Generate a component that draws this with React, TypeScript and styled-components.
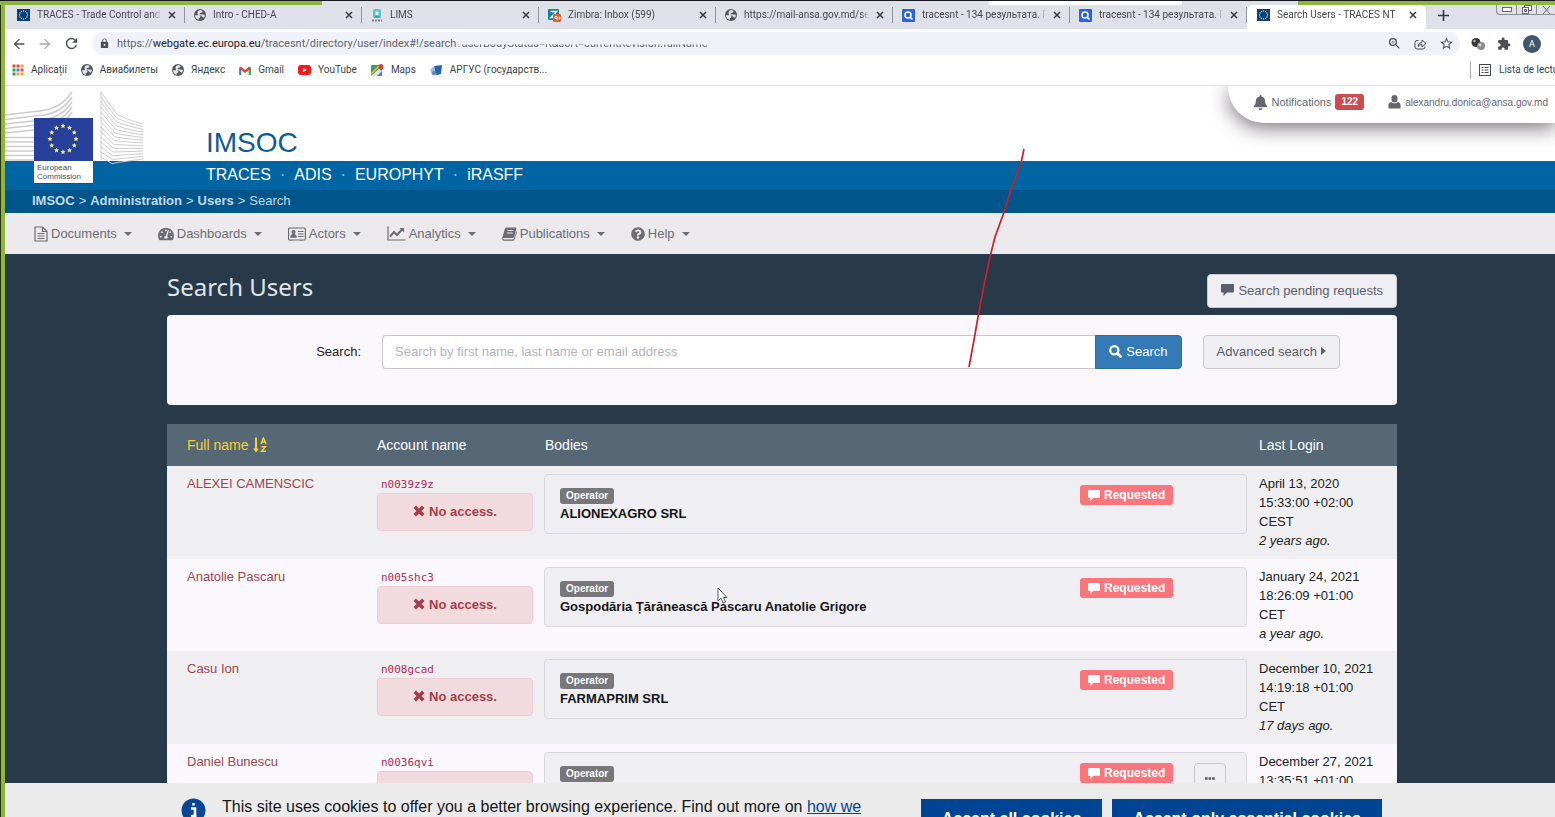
import React from "react";
import styled, { createGlobalStyle, css } from "styled-components";
import { FaBell, FaQuestionCircle, FaTachometerAlt } from "react-icons/fa";
import { MdExtension, MdOutlineZoomIn, MdStarBorder, MdLock, MdArrowBack, MdArrowForward, MdRefresh } from "react-icons/md";

const UI = `Roboto, "Noto Sans", sans-serif`;
const HEADING = `"Noto Sans", "Open Sans", sans-serif`;
const ARIAL = `"Liberation Sans", Arial, sans-serif`;

const Global = createGlobalStyle`
  *, *::before, *::after { box-sizing: border-box; }
  body { margin: 0; background: #283a4a; font: 13px/19px ${ARIAL}; color: #222; }
  a { color: inherit; text-decoration: none; }
  button, input { font-family: inherit; }
  svg { flex: none; }
`;

/* ---------- desktop frame ---------- */
const Screen = styled.div`
  position: relative;
  display: flex;
  flex-direction: column;
  height: 100vh;
  overflow: hidden;
  padding-left: 5px;
  background: linear-gradient(to right, #26330f 1px, #8fb53a 1px);
`;
const ShareFrame = styled.div`
  position: absolute;
  inset: 0 0 auto 0;
  height: 5px;
  border-top: 1px solid #17171f;
  background: linear-gradient(to right, #8fb53a 322px, transparent 322px, transparent 989px, #fff 989px, #fff 1182px, transparent 1182px, transparent calc(100% - 257px), #8fb53a calc(100% - 257px));
`;
const Scribble = styled.svg`
  position: absolute;
  top: 145px;
  left: 955px;
  pointer-events: none;
`;
const Pointer = styled.svg`
  position: absolute;
  top: 587px;
  left: 717px;
  pointer-events: none;
`;

/* ---------- browser ---------- */
const TabStrip = styled.div`
  display: flex;
  align-items: stretch;
  flex: none;
  height: 29px;
  padding: 5px 0 0 3px;
  background: #dee1e8;
  font: 10px/20px ${UI};
  color: #45484d;
`;
const Tab = styled.div<{ $active?: boolean }>`
  display: flex;
  align-items: center;
  flex: none;
  width: 177px;
  padding: 0 9px 4px;
  gap: 7px;
  position: relative;
  ${(p) =>
    p.$active
      ? css`
          width: 179px;
          padding: 0 9px 4px 10px;
          background: #fff;
          border-radius: 6px 6px 0 0;
        `
      : css`
          &::after {
            content: "";
            position: absolute;
            right: 0;
            top: 2px;
            height: 16px;
            width: 1px;
            background: #90949b;
          }
        `}
`;
const TabTitle = styled.span`
  flex: 1;
  min-width: 0;
  overflow: hidden;
  white-space: nowrap;
  mask-image: linear-gradient(to left, transparent, #000 8px);
`;
const PlainButton = styled.button`
  display: inline-flex;
  align-items: center;
  justify-content: center;
  flex: none;
  padding: 0;
  border: 0;
  background: none;
  color: inherit;
`;
const NewTab = styled(PlainButton)`
  width: 34px;
  padding-bottom: 4px;
`;
const WindowControls = styled.div`
  display: flex;
  align-self: flex-start;
  margin-left: auto;
  height: 10px;
  border: 1px solid #8b8d99;
  border-top: 0;
  border-right: 0;
  border-radius: 0 0 0 4px;
`;
const WindowButton = styled(PlainButton)`
  width: 20px;
  border-right: 1px solid #8b8d99;
  &:last-child { border: 0; width: 18px; }
`;
const Toolbar = styled.div`
  display: flex;
  align-items: center;
  flex: none;
  height: 29px;
  padding: 0 14px 0 6px;
  background: #fff;
  color: #4b4e53;
`;
const NavButtons = styled.div`
  display: flex;
  gap: 10px;
`;
const Omnibox = styled.form`
  display: flex;
  align-items: center;
  flex: 1;
  min-width: 0;
  height: 23px;
  margin: 0 11px 0 12px;
  padding: 0 6px 0 7px;
  border-radius: 12px;
  background: #eff2f8;
  font: 11px/20px ${UI};
`;
const Url = styled.span`
  display: flex;
  flex: 1;
  min-width: 0;
  margin-left: 7px;
  white-space: nowrap;
  color: #5f646b;
  b { font-weight: 400; color: #1f2124; }
`;
const TornText = styled.span`
  mask-image: linear-gradient(transparent 10px, #000 11px);
`;
const Actions = styled.div`
  display: flex;
  align-items: center;
  gap: 12px;
`;
const Avatar = styled(PlainButton)`
  width: 18px;
  height: 18px;
  border-radius: 50%;
  background: #40566b;
  color: #fff;
  font: 9px/18px ${UI};
`;
const Bookmarks = styled.nav`
  display: flex;
  align-items: center;
  flex: none;
  height: 28px;
  padding: 0 0 3px 7px;
  border-bottom: 1px solid #e4e0e7;
  background: #fff;
  font: 10px/18px ${UI};
  color: #3c3f44;
`;
const Bookmark = styled.a`
  display: flex;
  align-items: center;
  gap: 7px;
  margin-right: 14px;
  white-space: nowrap;
`;
const ReadingList = styled(PlainButton)`
  gap: 8px;
  margin: 0 -12px 0 auto;
  padding-left: 8px;
  border-left: 1px solid #aab;
  font: 10px/18px ${UI};
  white-space: nowrap;
`;

/* ---------- site header ---------- */
const Site = styled.div`
  display: flex;
  flex-direction: column;
  flex: 1;
  min-height: 0;
  overflow: hidden;
  background: #283a4a;
`;
const Masthead = styled.header`
  position: relative;
  flex: none;
`;
const Brand = styled.div`
  display: flex;
  justify-content: space-between;
  align-items: flex-start;
  height: 75px;
  padding-left: 201px;
  background: #fff;
`;
const BrandName = styled.a`
  margin-top: 39px;
  font-size: 28px;
  line-height: 36px;
  color: #0f5b94;
`;
const UserBar = styled.div`
  display: flex;
  align-items: center;
  height: 37px;
  padding: 0 7px 5px 25px;
  border-radius: 0 0 0 36px;
  background: #fff;
  box-shadow: 0 5px 20px rgba(50, 40, 50, 0.65);
  clip-path: inset(0 0 -38px -40px);
  font-size: 11px;
  color: #66676c;
`;
const UserLink = styled.a<{ $small?: boolean }>`
  display: flex;
  align-items: center;
  gap: 4px;
  font-size: ${(p) => (p.$small ? "10px" : "11px")};
  & + & { margin-left: 24px; }
`;
const Count = styled.span`
  padding: 0 6px;
  border-radius: 3px;
  background: #cf4a4e;
  color: #fff;
  font-weight: 700;
  font-size: 10px;
  line-height: 16px;
`;
const Logo = styled.a`
  position: absolute;
  top: 5px;
  left: 0;
  width: 140px;
`;
const LogoCaption = styled.span`
  display: block;
  position: absolute;
  top: 70px;
  left: 29px;
  width: 59px;
  padding: 2px 3px;
  background: #fff;
  color: #4a4c58;
  font-size: 8px;
  line-height: 9px;
`;
const SystemBar = styled.nav`
  display: flex;
  align-items: center;
  gap: 9px;
  height: 29px;
  padding: 0 0 3px 201px;
  background: #0065a2;
  color: #fff;
  font-size: 16px;
  span { color: #a9cbe2; }
`;
const Crumbs = styled.nav`
  display: flex;
  gap: 4px;
  height: 23px;
  padding-left: 27px;
  background: #00558a;
  color: #c3d9e8;
  line-height: 22px;
`;
const MenuBar = styled.nav`
  display: flex;
  align-items: center;
  gap: 26px;
  height: 41px;
  padding-left: 29px;
  background: #ebe9ec;
  color: #6c6d74;
`;
const MenuItem = styled(PlainButton)`
  gap: 3px;
  font-size: 13px;
  line-height: 19px;
`;
const Caret = styled.i`
  margin-left: 4px;
  border: 4px solid transparent;
  border-top-color: currentColor;
  border-bottom: 0;
`;
const RightCaret = styled.i`
  border: 4px solid transparent;
  border-left: 5px solid currentColor;
  border-right: 0;
`;

/* ---------- page ---------- */
const Main = styled.main`
  padding: 20px 158px 0 162px;
`;
const PageHead = styled.div`
  display: flex;
  justify-content: space-between;
  height: 41px;
`;
const Title = styled.h1`
  margin: 0;
  font: 24px/26px ${HEADING};
  color: #dfe6ee;
`;
const Button = styled.button`
  display: inline-flex;
  align-items: center;
  gap: 4px;
  height: 34px;
  padding: 0 13px 2px;
  border: 1px solid #c9c8cf;
  border-radius: 4px;
  background: #efeef2;
  color: #5a606b;
  font-size: 13px;
  white-space: nowrap;
`;
const PrimaryButton = styled(Button)`
  border-color: #2e6da4;
  border-radius: 0 4px 4px 0;
  background: #337ab7;
  color: #fff;
`;
const SearchPanel = styled.form`
  display: flex;
  align-items: flex-start;
  height: 90px;
  padding: 20px 57px 0 0;
  border-radius: 4px;
  background: #f9f7fb;
`;
const Label = styled.label`
  width: 194px;
  line-height: 34px;
  text-align: right;
`;
const SearchInput = styled.input`
  flex: 1;
  min-width: 0;
  height: 34px;
  margin-left: 21px;
  padding: 0 12px 2px;
  border: 1px solid #c9c4cd;
  border-right: 0;
  border-radius: 4px 0 0 4px;
  background: #fff;
  font-size: 13px;
  &::placeholder { color: #b4b3b9; }
`;
const AdvancedButton = styled(Button)`
  margin-left: 21px;
`;
const Table = styled.table`
  width: 100%;
  margin-top: 19px;
  border-collapse: collapse;
  table-layout: fixed;
`;
const Th = styled.th<{ $w?: number }>`
  width: ${(p) => (p.$w ? p.$w + "px" : "auto")};
  height: 42px;
  padding: 0 6px;
  background: #566775;
  color: #fff;
  font-size: 14px;
  font-weight: 400;
  text-align: left;
  &:first-child { padding-left: 20px; }
`;
const SortButton = styled(PlainButton)`
  gap: 5px;
  font-size: 14px;
  color: #f3d12f;
`;
const Row = styled.tr`
  height: 92px;
  background: #faf8fc;
  &:nth-child(odd) { height: 93px; background: #efeff1; }
`;
const Td = styled.td`
  padding: 8px 6px;
  vertical-align: top;
  &:first-child { padding-left: 20px; }
`;
const NameLink = styled.a`
  color: #a0454f;
`;
const Account = styled.code`
  display: block;
  margin-top: 2px;
  padding-left: 4px;
  color: #b52a57;
  font: 11px/17px "DejaVu Sans Mono", monospace;
`;
const NoAccess = styled.div`
  display: flex;
  align-items: center;
  justify-content: center;
  gap: 4px;
  height: 38px;
  padding-bottom: 2px;
  border: 1px solid #ecccd2;
  border-radius: 4px;
  background: #f2dbdf;
  color: #a43e49;
  font-weight: 700;
`;
const BodyCard = styled.div`
  display: flex;
  height: 60px;
  margin-left: -1px;
  padding: 10px 15px 0;
  border: 1px solid #d9d8df;
  border-radius: 4px;
  background: #efeef2;
`;
const BodyInfo = styled.div`
  flex: 1;
  color: #151518;
  font-weight: 700;
  line-height: 20px;
`;
const BodyStatus = styled.div`
  display: flex;
  justify-content: space-between;
  align-items: flex-start;
  width: 151px;
  padding-right: 5px;
`;
const Tag = styled.span`
  display: block;
  width: max-content;
  margin-top: 3px;
  padding: 0 6px;
  border-radius: 3px;
  background: #77777a;
  color: #fff;
  font-size: 10px;
  line-height: 16px;
`;
const Requested = styled.span`
  display: flex;
  align-items: center;
  gap: 4px;
  padding: 0 8px;
  border-radius: 3px;
  background: #fb757c;
  color: #fff;
  font-size: 12px;
  font-weight: 700;
  line-height: 20px;
`;
const MoreButton = styled(Button)`
  justify-content: center;
  width: 32px;
  padding: 0 0 4px;
`;

/* ---------- cookie notice ---------- */
const CookieNotice = styled.aside`
  display: flex;
  align-items: flex-start;
  flex: none;
  height: 34px;
  padding: 15px 173px 0 176px;
  overflow: hidden;
  background: #ebebec;
  color: #161616;
  font-size: 16px;
  line-height: 18px;
`;
const InfoMark = styled.svg`
  margin-right: 16px;
`;
const CookieText = styled.p`
  flex: 1;
  margin: 0 32px 0 0;
  a { color: #004494; text-decoration: underline; }
`;
const CookieButton = styled.button`
  height: 40px;
  margin-top: 1px;
  padding: 0 21px;
  border: 0;
  background: #004494;
  color: #fff;
  font-size: 16px;
  font-weight: 700;
  white-space: nowrap;
  & + & { margin-left: 10px; }
`;

/* ---------- drawings ---------- */
const ring = (cx: number, cy: number, r: number) =>
  Array.from({ length: 12 }, (_, i) => [cx + r * Math.sin((i * Math.PI) / 6), cy - r * Math.cos((i * Math.PI) / 6)]);

const EuIcon = () => (
  <svg width="13" height="12">
    <rect width="13" height="12" fill="#0b3f78" />
    {ring(6.5, 6, 4).map(([x, y], i) => (
      <circle key={i} cx={x} cy={y} r="0.7" fill="#cfd9c0" />
    ))}
  </svg>
);
const Globe = () => (
  <svg width="12" height="12" viewBox="0 0 12 12">
    <circle cx="6" cy="6" r="6" fill="#54585d" />
    <path d="M1 6.200L4.500 6l2 1.500-.5 1.300L4.800 9v1.800Q1.200 10 1 6.200zM4 2l2.500-1 2 .8L8 3.500 6 4l-.5 1.200L8 5.500l2.800.2Q11 7 10 8.800L8.500 8 7 6.500H4.200L3.500 4.200z" fill="#e3e5ea" />
  </svg>
);
const Lims = () => (
  <svg width="12" height="13">
    <rect x="2" width="8" height="9" rx="2" fill="#5cc3cb" />
    <path d="M4.500 2.500h3V6h-3z" fill="#e3f7f6" />
    <path d="M2 8.500q4-3 8 0" fill="#3a8fb0" />
    <path d="M1 11.500h10" stroke="#6f7f98" strokeWidth="2" strokeDasharray="2 1" />
  </svg>
);
const Zimbra = () => (
  <svg width="13" height="13">
    <rect width="11" height="11" rx="1" fill="#18809b" />
    <path d="M2.500 2.500h6l-5.500 6h3" stroke="#fff" fill="none" strokeWidth="1.500" />
    <rect x="5" y="5" width="8" height="8" rx="1" fill="#e0602a" />
    <path d="M7 9.500h2v-2H7zM9 9v2M10 9h3M11.500 7.500v3" stroke="#fff" fill="none" strokeWidth="0.800" />
  </svg>
);
const SearchTile = () => (
  <svg width="13" height="13">
    <rect width="13" height="13" rx="1" fill="#2c62dc" />
    <circle cx="6" cy="6" r="3" fill="none" stroke="#fff" strokeWidth="1.500" />
    <path d="M8 8l2.500 2.500" stroke="#fff" strokeWidth="1.700" />
  </svg>
);
const Cross = () => (
  <svg width="8" height="8">
    <path d="M1 1l6 6M7 1L1 7" stroke="#37393d" strokeWidth="1.500" />
  </svg>
);
const Apps = () => (
  <svg width="12" height="12">
    {["#df4b3c", "#df4b3c", "#e8a33c", "#3d9b5b", "#4a7ad8", "#df4b3c", "#3d9b5b", "#e8a33c", "#e8a33c"].map((c, i) => (
      <rect key={i} x={(i % 3) * 4 + 0.5} y={Math.floor(i / 3) * 4 + 0.5} width="3" height="3" fill={c} />
    ))}
  </svg>
);
const Gmail = () => (
  <svg width="12" height="9">
    <path d="M1.200 9V1.500" stroke="#4a7ad8" strokeWidth="2.200" />
    <path d="M10.800 9V1.500" stroke="#3d9b5b" strokeWidth="2.200" />
    <path d="M1 1.500l5 4 5-4" stroke="#dc4437" strokeWidth="2.400" fill="none" />
  </svg>
);
const YouTube = () => (
  <svg width="13" height="10">
    <rect width="13" height="10" rx="3" fill="#ee1c1c" />
    <path d="M5 3l4 2-4 2z" fill="#fff" />
  </svg>
);
const Maps = () => (
  <svg width="13" height="12">
    <rect y="1" width="11" height="11" rx="1" fill="#34a160" />
    <path d="M0 12L11 2v10z" fill="#dfe3e8" />
    <path d="M0 10L9 1" stroke="#f0c23c" strokeWidth="1.500" />
    <path d="M6 12l5-5v5z" fill="#4a7ad8" />
    <path d="M10 7C8 4.500 7.500 4 7.500 2.500a2.500 2.500 0 015 0C12.500 4 12 4.500 10 7z" fill="#e04437" />
  </svg>
);
const Argus = () => (
  <svg width="13" height="12">
    <circle cx="5" cy="7" r="4.500" fill="#9ebfdf" />
    <path d="M4 2l8-1-1 9-4 1C4 9 6 5 4 2z" fill="#2466ae" />
    <circle cx="4" cy="9" r="2" fill="#5c87bd" />
  </svg>
);
const Share = () => (
  <svg width="13" height="12" fill="none" stroke="#4b4e53">
    <path d="M4.500 2.500H3Q1 2.500 1 4.500v4.500q0 2 2 2h6q2 0 2-2V8.500" />
    <path d="M4 8.500Q4 4.500 8 4.500V2l4 3.500L8 9V6.500Q5.500 6.500 4 8.500z" />
  </svg>
);
const Balls = () => (
  <svg width="14" height="12">
    <circle cx="5" cy="4.500" r="4.500" fill="#37383b" />
    <circle cx="3.500" cy="3" r="1.200" fill="#bbb" />
    <circle cx="10" cy="8" r="4" fill="#8b8b8f" />
    <circle cx="9" cy="7" r="1.500" fill="#ddd" />
  </svg>
);
const ListIcon = () => (
  <svg width="12" height="12" fill="none" stroke="#45484d">
    <rect x="0.500" y="0.500" width="11" height="11" />
    <path d="M2.500 3.500h2M5.500 3.500h4M2.500 6h2M5.500 6h4M2.500 8.500h2M5.500 8.500h4" />
  </svg>
);
const UserIcon = () => (
  <svg width="13" height="14" fill="currentColor">
    <rect x="3.500" y="0" width="6" height="7.500" rx="3" />
    <path d="M0.500 13.500V9.500Q0.500 7.500 3 7L5 8.300h3L10 7Q12.500 7.500 12.500 9.500v4z" />
  </svg>
);
const FileIcon = () => (
  <svg width="14" height="16" fill="none" stroke="currentColor" strokeWidth="1.200">
    <path d="M1 1h7.500L13 5.500V15H1zM8.500 1v4.500H13M3.500 7.500h7M3.500 10h7M3.500 12.500h7" />
  </svg>
);
const CardIcon = () => (
  <svg width="18" height="14" fill="none" stroke="currentColor" strokeWidth="1.200">
    <rect x="0.600" y="1" width="16.800" height="12" rx="1" />
    <circle cx="5.500" cy="5" r="2.100" fill="currentColor" stroke="none" />
    <path d="M2.300 10.800Q2.300 6.800 5.500 6.800t3.200 4z" fill="currentColor" stroke="none" />
    <path d="M10 4.500h5.500M10 7h5.500M10 9.500h5.500M3 13v1M13 13v1" />
  </svg>
);
const ChartIcon = () => (
  <svg width="19" height="15" fill="none" stroke="currentColor">
    <path d="M1 0.500V14h17.500" strokeWidth="1.200" />
    <path d="M3 10.500l4-4.500 3 3 5-5.500" strokeWidth="2" />
    <path d="M12.500 2H17v4.500z" fill="currentColor" stroke="none" />
  </svg>
);
const BookIcon = () => (
  <svg width="15" height="14">
    <path d="M4.500 0.500h9q1.200 0 .9 1.200L12 10q-.3 1-1.500 1H2q-1 0-1 .8t1 .8h8.800q.8 0 1-.8L14.500 4q.7.500.4 1.500L12.500 12.500q-.4 1.200-1.700 1.200H2Q0 13.500.1 11.500L2.800 2Q3.200.5 4.500.5z" fill="currentColor" />
    <path d="M5.500 3.500h6M4.800 6h6" stroke="#ebe9ec" />
  </svg>
);
const Comment = ({ size = 13 }: { size?: number }) => (
  <svg width={size} height={size - 1} viewBox="0 0 13 12">
    <path d="M1 0h11q1 0 1 1v6.500q0 1-1 1H6L2.500 12V8.500H1q-1 0-1-1V1q0-1 1-1z" fill="currentColor" />
  </svg>
);
const Magnifier = () => (
  <svg width="13" height="13" fill="none" stroke="currentColor">
    <circle cx="5.300" cy="5.300" r="4.100" strokeWidth="2.200" />
    <path d="M8.500 8.500l3 3" strokeWidth="2.600" strokeLinecap="round" />
  </svg>
);
const Remove = () => (
  <svg width="12" height="12">
    <path d="M3 0.500l3 3 3-3L11.500 3l-3 3 3 3L9 11.500l-3-3-3 3L0.500 9l3-3-3-3z" fill="currentColor" />
  </svg>
);
const SortIcon = () => (
  <svg width="14" height="16" fill="none" stroke="currentColor" strokeWidth="1.500">
    <path d="M3 0.500V14" strokeWidth="2" />
    <path d="M0 11.500h6L3 15.500z" fill="currentColor" stroke="none" />
    <path d="M8 7l2.500-6L13 7M9 5h3M8.500 9.700h4L8.500 14.300h4.500" />
  </svg>
);
const EcLogo = () => (
  <svg width="140" height="94" fill="none" stroke="#cccbd1">
    {Array.from({ length: 11 }, (_, i) => (
      <path
        key={i}
        d={i < 5 ? `M0 ${24 + i * 4.5}L34 ${20 + i * 4.6}Q56 ${18 + i * 5} 67 ${1 + i * 5}` : `M0 ${24 + i * 4.5}H30`}
        strokeWidth="1.500"
      />
    ))}
    {Array.from({ length: 14 }, (_, i) => (
      <path key={i} d={`M96 ${1 + i * 5}L${111 - i * 0.3} ${22 + i * 3.9}Q${114 - i * 0.3} ${26 + i * 3.5} 138 ${33 + i * 2.7}`} />
    ))}
    <path d="M96 1v68" />
    <rect x="29" y="27" width="59" height="43" fill="#27409b" stroke="none" />
    {ring(58, 48, 13).map(([x, y], i) => (
      <path
        key={i}
        transform={`translate(${x} ${y})`}
        d="M0-2.600L.8-.9 2.500-.8 1.200.5 1.600 2.200 0 1.300-1.600 2.200-1.200.5-2.500-.8-.8-.9z"
        fill="#eef07a"
        stroke="none"
      />
    ))}
    <rect x="29" y="91" width="59" height="2" fill="#2a3f93" stroke="none" />
  </svg>
);

/* ---------- data ---------- */
const tabs = [
  { icon: <EuIcon />, title: "TRACES - Trade Control and Expert" },
  { icon: <Globe />, title: "Intro - CHED-A" },
  { icon: <Lims />, title: "LIMS" },
  { icon: <Zimbra />, title: "Zimbra: Inbox (599)" },
  { icon: <Globe />, title: "https://mail-ansa.gov.md/service" },
  { icon: <SearchTile />, title: "tracesnt - 134 результата. Поиск" },
  { icon: <SearchTile />, title: "tracesnt - 134 результата. Поиск" },
];
const bookmarks = [
  { icon: <Apps />, label: "Aplicații" },
  { icon: <Globe />, label: "Авиабилеты" },
  { icon: <Globe />, label: "Яндекс" },
  { icon: <Gmail />, label: "Gmail" },
  { icon: <YouTube />, label: "YouTube" },
  { icon: <Maps />, label: "Maps" },
  { icon: <Argus />, label: "АРГУС (государств..." },
];
const menu = [
  { icon: <FileIcon />, label: "Documents" },
  { icon: <FaTachometerAlt size={16} />, label: "Dashboards" },
  { icon: <CardIcon />, label: "Actors" },
  { icon: <ChartIcon />, label: "Analytics" },
  { icon: <BookIcon />, label: "Publications" },
  { icon: <FaQuestionCircle size={14} />, label: "Help" },
];
const users = [
  { name: "ALEXEI CAMENSCIC", account: "n0039z9z", body: "ALIONEXAGRO SRL", date: "April 13, 2020", time: "15:33:00 +02:00", zone: "CEST", ago: "2 years ago." },
  { name: "Anatolie Pascaru", account: "n005shc3", body: "Gospodăria Țărănească Pascaru Anatolie Grigore", date: "January 24, 2021", time: "18:26:09 +01:00", zone: "CET", ago: "a year ago." },
  { name: "Casu Ion", account: "n008gcad", body: "FARMAPRIM SRL", date: "December 10, 2021", time: "14:19:18 +01:00", zone: "CET", ago: "17 days ago." },
  { name: "Daniel Bunescu", account: "n0036qvi", body: "", date: "December 27, 2021", time: "13:35:51 +01:00", zone: "CET", ago: "", more: true },
];

export default function App() {
  return (
    <Screen>
      <Global />
      <TabStrip>
        {tabs.map((t, i) => (
          <Tab key={i}>
            {t.icon}
            <TabTitle>{t.title}</TabTitle>
            <PlainButton aria-label="Close tab"><Cross /></PlainButton>
          </Tab>
        ))}
        <Tab $active>
          <EuIcon />
          <TabTitle>Search Users - TRACES NT</TabTitle>
          <PlainButton aria-label="Close tab"><Cross /></PlainButton>
        </Tab>
        <NewTab aria-label="New tab">
          <svg width="11" height="11"><path d="M5.500 0v11M0 5.500h11" stroke="#37393d" strokeWidth="1.600" /></svg>
        </NewTab>
        <WindowControls>
          <WindowButton aria-label="Minimize"><svg width="10" height="5"><rect x="0.500" y="0.500" width="9" height="4" fill="#fff" stroke="#666875" /></svg></WindowButton>
          <WindowButton aria-label="Restore"><svg width="10" height="9" fill="#fff" stroke="#666875"><rect x="2.500" y="0.500" width="7" height="5" /><rect x="0.500" y="2.500" width="6" height="6" /><rect x="2.500" y="4.500" width="2" height="2" /></svg></WindowButton>
          <WindowButton aria-label="Close"><svg width="9" height="8"><path d="M1 0l7 8M8 0L1 8" stroke="#666875" /></svg></WindowButton>
        </WindowControls>
      </TabStrip>

      <Toolbar>
        <NavButtons>
          <PlainButton aria-label="Back"><MdArrowBack size={16} /></PlainButton>
          <PlainButton aria-label="Forward"><MdArrowForward size={16} color="#a7a9ae" /></PlainButton>
          <PlainButton aria-label="Reload"><MdRefresh size={17} /></PlainButton>
        </NavButtons>
        <Omnibox>
          <MdLock size={11} />
          <Url>
            <span>https://<b>webgate.ec.europa.eu</b>/tracesnt/directory/user/index#!/search</span>
            <TornText>?userBodyStatus=R&amp;sort=currentRevision.fullName</TornText>
          </Url>
          <Actions>
            <MdOutlineZoomIn size={15} />
            <Share />
            <MdStarBorder size={15} />
          </Actions>
        </Omnibox>
        <Actions>
          <Balls />
          <MdExtension size={14} />
          <Avatar>A</Avatar>
        </Actions>
      </Toolbar>

      <Bookmarks>
        {bookmarks.map((b) => (
          <Bookmark key={b.label} href="#">{b.icon}{b.label}</Bookmark>
        ))}
        <ReadingList><ListIcon />Lista de lectură</ReadingList>
      </Bookmarks>

      <Site>
        <Masthead>
          <Brand>
            <BrandName href="#">IMSOC</BrandName>
            <UserBar>
              <UserLink href="#"><FaBell size={15} />Notifications <Count>122</Count></UserLink>
              <UserLink href="#" $small><UserIcon />alexandru.donica@ansa.gov.md</UserLink>
            </UserBar>
          </Brand>
          <SystemBar>
            <a href="#">TRACES</a><span>·</span><a href="#">ADIS</a><span>·</span><a href="#">EUROPHYT</a><span>·</span><a href="#">iRASFF</a>
          </SystemBar>
          <Logo href="#" aria-label="European Commission">
            <EcLogo />
            <LogoCaption>European Commission</LogoCaption>
          </Logo>
          <Crumbs>
            <a href="#"><b>IMSOC</b></a>
            <span>&gt;</span>
            <a href="#"><b>Administration</b></a>
            <span>&gt;</span>
            <a href="#"><b>Users</b></a>
            <span>&gt;</span>
            <span>Search</span>
          </Crumbs>
          <MenuBar>
            {menu.map((m) => (
              <MenuItem key={m.label}>{m.icon}{m.label}<Caret /></MenuItem>
            ))}
          </MenuBar>
        </Masthead>

        <Main>
          <PageHead>
            <Title>Search Users</Title>
            <Button><Comment />Search pending requests</Button>
          </PageHead>
          <SearchPanel>
            <Label htmlFor="q">Search:</Label>
            <SearchInput id="q" placeholder="Search by first name, last name or email address" />
            <PrimaryButton type="button"><Magnifier />Search</PrimaryButton>
            <AdvancedButton type="button">Advanced search<RightCaret /></AdvancedButton>
          </SearchPanel>

          <Table>
            <thead>
              <tr>
                <Th $w={204}><SortButton>Full name<SortIcon /></SortButton></Th>
                <Th $w={168}>Account name</Th>
                <Th>Bodies</Th>
                <Th $w={144}>Last Login</Th>
              </tr>
            </thead>
            <tbody>
              {users.map((u) => (
                <Row key={u.account}>
                  <Td><NameLink href="#">{u.name}</NameLink></Td>
                  <Td>
                    <Account>{u.account}</Account>
                    <NoAccess><Remove />No access.</NoAccess>
                  </Td>
                  <Td>
                    <BodyCard>
                      <BodyInfo><Tag>Operator</Tag>{u.body}</BodyInfo>
                      <BodyStatus>
                        <Requested><Comment size={12} />Requested</Requested>
                        {u.more && <MoreButton aria-label="More"><svg width="10" height="3"><path d="M0 1.500h10" stroke="#55585f" strokeWidth="2.500" strokeDasharray="2.600 1" /></svg></MoreButton>}
                      </BodyStatus>
                    </BodyCard>
                  </Td>
                  <Td>{u.date}<br />{u.time}<br />{u.zone}<br /><em>{u.ago}</em></Td>
                </Row>
              ))}
            </tbody>
          </Table>
        </Main>
      </Site>

      <CookieNotice>
        <InfoMark width="25" height="25">
          <circle cx="12.500" cy="12.500" r="12" fill="#0b4595" />
          <path d="M10 10.500h4V18h1.500M10 18h5M12.500 5v2.500" stroke="#fff" strokeWidth="2.500" fill="none" />
        </InfoMark>
        <CookieText>
          This site uses cookies to offer you a better browsing experience. Find out more on <a href="#">how we use cookies.</a>
        </CookieText>
        <CookieButton>Accept all cookies</CookieButton>
        <CookieButton>Accept only essential cookies</CookieButton>
      </CookieNotice>

      <ShareFrame />
      <Scribble width="80" height="230" fill="none">
        <path d="M69 4L66 18 56 45 48 70 40 92 35 112 29 140 23 172 19 195 14 222" stroke="#c9202c" strokeWidth="1.700" />
      </Scribble>
      <Pointer width="12" height="18">
        <path d="M1 1v13l3-3 2 5 2.500-1-2-4.500H10z" fill="#fff" stroke="#55565c" />
      </Pointer>
    </Screen>
  );
}
